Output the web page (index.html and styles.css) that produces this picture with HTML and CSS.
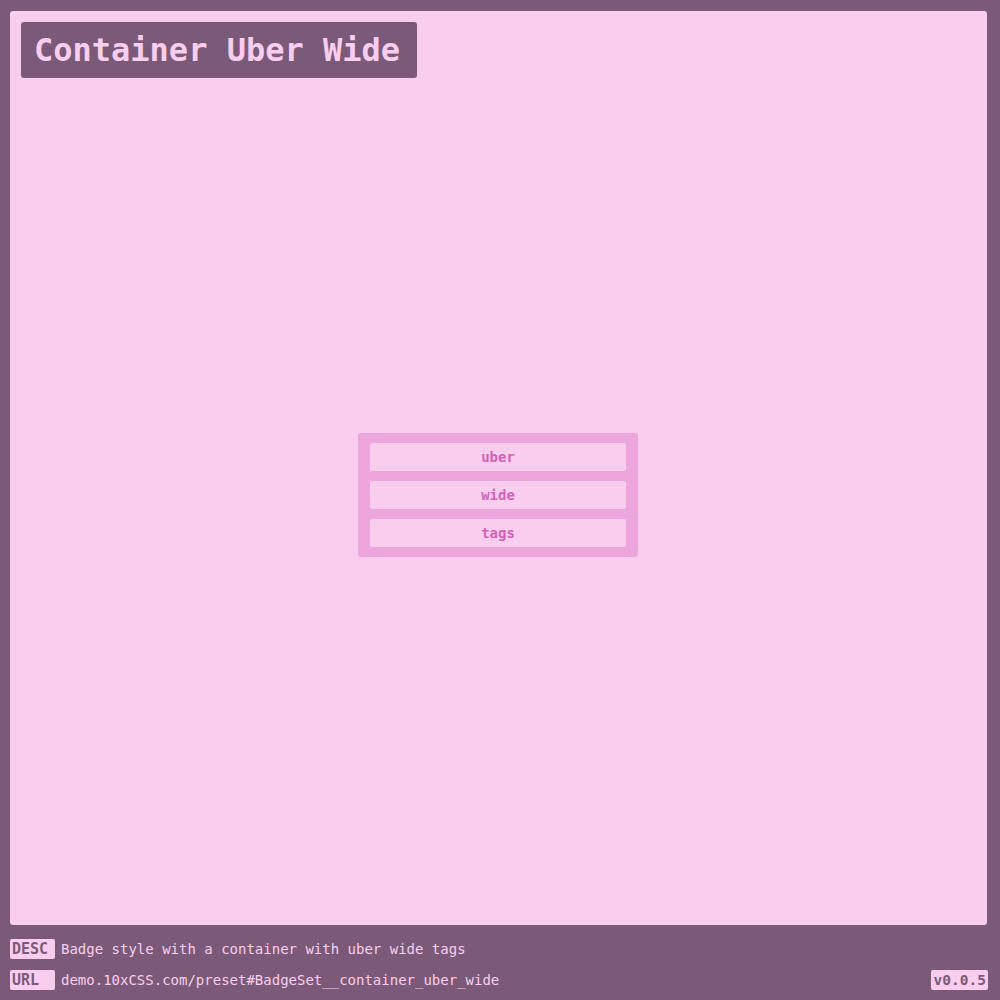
FILE: index.html
```html
<!DOCTYPE html>
<html>
<head>
<meta charset="utf-8">
<link rel="stylesheet" href="styles.css">
</head>
<body>
<main class="card">
  <h1 class="title">Container Uber Wide</h1>
  <section class="stage">
    <div class="badge-set">
      <span class="badge">uber</span>
      <span class="badge">wide</span>
      <span class="badge">tags</span>
    </div>
  </section>
</main>
<footer class="meta">
  <div class="meta-row">
    <span class="label">DESC</span>
    <span class="meta-text">Badge style with a container with uber wide tags</span>
  </div>
  <div class="meta-row">
    <span class="label">URL</span>
    <span class="meta-text">demo.10xCSS.com/preset#BadgeSet__container_uber_wide</span>
    <span class="version">v0.0.5</span>
  </div>
</footer>
</body>
</html>
```

FILE: styles.css
```css
html, body {
  margin: 0;
  padding: 0;
}
body {
  background: #7a5a78;
  width: 1000px;
  height: 1000px;
  box-sizing: border-box;
  padding: 11px 13px 0 10px;
  display: flex;
  flex-direction: column;
  font-family: "DejaVu Sans Mono", "Liberation Mono", monospace;
}
.card {
  background: #f9cdee;
  border-radius: 3px;
  height: 914px;
  box-sizing: border-box;
  padding: 11px 11px 13px 11px;
  display: flex;
  flex-direction: column;
}
.title {
  margin: 0;
  align-self: flex-start;
  box-sizing: border-box;
  width: 396px;
  background: #7a5a78;
  color: #f9cdee;
  font-size: 32px;
  font-weight: bold;
  line-height: 56px;
  height: 56px;
  padding: 0 0 0 13px;
  border-radius: 3px;
  white-space: nowrap;
}
.stage {
  flex: 1;
  display: flex;
  align-items: center;
  justify-content: center;
}
.badge-set {
  background: #eca6dc;
  border-radius: 3px;
  width: 280px;
  box-sizing: border-box;
  padding: 10px 12px;
  display: flex;
  flex-direction: column;
  gap: 10px;
  margin-right: 1px;
}
.badge {
  background: #f9cdee;
  color: #d263b4;
  height: 28px;
  line-height: 28px;
  text-align: center;
  font-size: 14px;
  font-weight: bold;
  border-radius: 2px;
}
.meta {
  display: flex;
  flex-direction: column;
  padding-top: 14px;
  gap: 11px;
}
.meta-row {
  display: flex;
  align-items: center;
  height: 20px;
}
.label, .version {
  background: #f9cdee;
  color: #7a5a78;
  font-size: 15px;
  font-weight: bold;
  height: 20px;
  line-height: 20px;
  border-radius: 2px;
  padding: 0 2px;
  box-sizing: border-box;
}
.label {
  width: 45px;
}
.meta-text {
  color: #f9cdee;
  font-size: 14px;
  margin-left: 6px;
}
.version {
  margin-left: auto;
  margin-right: -1px;
  padding: 0 2px 0 3px;
  font-size: 14.5px;
}
```
